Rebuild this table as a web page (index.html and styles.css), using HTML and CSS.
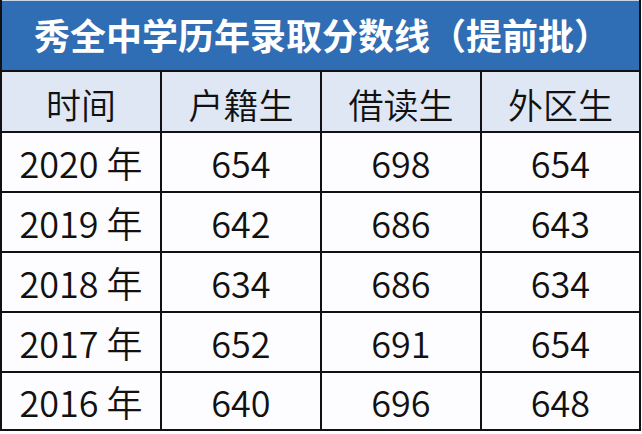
FILE: index.html
```html
<!DOCTYPE html>
<html lang="zh-CN">
<head>
<meta charset="utf-8">
<link rel="stylesheet" href="styles.css">
</head>
<body>
<div class="sheet">
  <div class="title">秀全中学历年录取分数线（提前批）</div>
  <div class="cell head">时间</div>
  <div class="cell head">户籍生</div>
  <div class="cell head">借读生</div>
  <div class="cell head">外区生</div>

  <div class="cell">2020 年</div>
  <div class="cell">654</div>
  <div class="cell">698</div>
  <div class="cell">654</div>

  <div class="cell">2019 年</div>
  <div class="cell">642</div>
  <div class="cell">686</div>
  <div class="cell">643</div>

  <div class="cell">2018 年</div>
  <div class="cell">634</div>
  <div class="cell">686</div>
  <div class="cell">634</div>

  <div class="cell">2017 年</div>
  <div class="cell">652</div>
  <div class="cell">691</div>
  <div class="cell">654</div>

  <div class="cell">2016 年</div>
  <div class="cell">640</div>
  <div class="cell">696</div>
  <div class="cell">648</div>
</div>
</body>
</html>
```

FILE: styles.css
```css
html, body {
  margin: 0;
  padding: 0;
  background: #ffffff;
}

.sheet {
  width: 637px;
  display: grid;
  grid-template-columns: 158px 158px 158px 157px;
  grid-template-rows: 70px 59px 58px 58px 58px 58px 56px;
  gap: 2px;
  padding: 0 2px 2px 2px;
  background: #111111;
  font-family: "Noto Sans CJK SC", "Noto Sans", sans-serif;
  color: #111111;
}

.title {
  grid-column: 1 / -1;
  background: #2f6db4;
  color: #ffffff;
  font-weight: 700;
  font-size: 36px;
  display: flex;
  align-items: center;
  padding-left: 32px;
  padding-bottom: 2px;
  box-shadow: inset 0 1px 0 #c9d6e6;
}

.cell {
  background: #fdfcfe;
  display: flex;
  align-items: center;
  justify-content: center;
  font-size: 36px;
  font-weight: 350;
  line-height: 1;
}

.head {
  background: #dee7f3;
  font-size: 35px;
  padding-top: 4px;
}
```
